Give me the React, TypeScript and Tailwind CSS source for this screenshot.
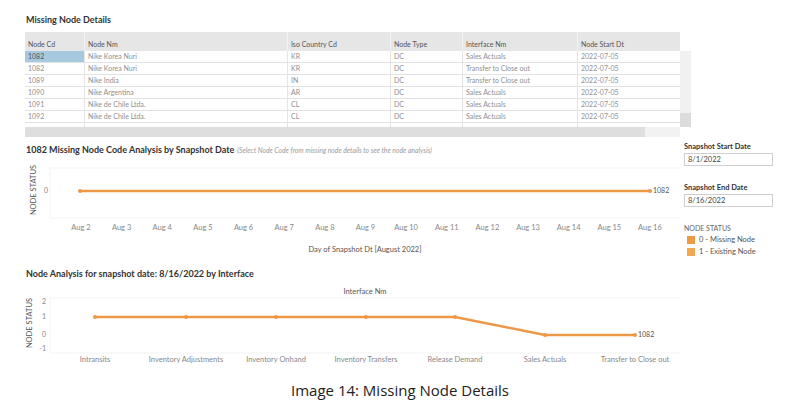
import React from "react";

const ORANGE = "#ec9847";

const columns = [
  { label: "Node Cd", w: "w-[60px]" },
  { label: "Node Nm", w: "w-[203px]" },
  { label: "Iso Country Cd", w: "w-[103px]" },
  { label: "Node Type", w: "w-[72px]" },
  { label: "Interface Nm", w: "w-[115px]" },
  { label: "Node Start Dt", w: "w-[102px]" },
];

const rows = [
  ["1082", "Nike Korea Nuri", "KR", "DC", "Sales Actuals", "2022-07-05"],
  ["1082", "Nike Korea Nuri", "KR", "DC", "Transfer to Close out", "2022-07-05"],
  ["1089", "Nike India", "IN", "DC", "Transfer to Close out", "2022-07-05"],
  ["1090", "Nike Argentina", "AR", "DC", "Sales Actuals", "2022-07-05"],
  ["1091", "Nike de Chile Ltda.", "CL", "DC", "Sales Actuals", "2022-07-05"],
  ["1092", "Nike de Chile Ltda.", "CL", "DC", "Sales Actuals", "2022-07-05"],
  ["", "", "", "", "", ""],
];

const days = Array.from({ length: 15 }, (_, i) => `Aug ${i + 2}`);

const interfaces = [
  { name: "Intransits", x: 70, v: 1 },
  { name: "Inventory Adjustments", x: 161, v: 1 },
  { name: "Inventory Onhand", x: 251, v: 1 },
  { name: "Inventory Transfers", x: 341, v: 1 },
  { name: "Release Demand", x: 430, v: 1 },
  { name: "Sales Actuals", x: 520, v: 0 },
  { name: "Transfer to Close out", x: 610, v: 0 },
];

// Missing node details table, Tableau-style
const NodeTable: React.FC = () => (
  <div className="ml-[25px] w-[666px]">
    <div className="flex h-[19px] w-[655px] bg-[#e6e6e6]">
      {columns.map((c, i) => (
        <div
          key={c.label}
          className={`${c.w} flex items-end pb-[2px] pl-[3px] text-[7px] leading-[9px] text-[#555] ${
            i < columns.length - 1 ? "border-r border-[#f2f2f2]" : ""
          }`}
        >
          {c.label}
        </div>
      ))}
    </div>
    <div className="flex h-[76px]">
      <div className="w-[655px] h-[76px] overflow-hidden">
        {rows.map((r, ri) => (
          <div key={ri} className="flex h-[12px] border-b border-[#e2e2e2]">
            {r.map((cell, ci) => (
              <div
                key={ci}
                className={`${columns[ci].w} pl-[3px] text-[7px] leading-[11px] ${
                  ri === 0 && ci === 0 ? "bg-[#a7c9dd] text-[#556]" : "text-[#909090]"
                } ${ci < columns.length - 1 ? "border-r border-[#e4e4e4]" : ""}`}
              >
                {cell}
              </div>
            ))}
          </div>
        ))}
      </div>
      <div className="w-[11px] h-[76px] bg-[#f1f1f1] flex flex-col justify-end">
        <div className="h-[14px] bg-[#dcdcdc]" />
      </div>
    </div>
    <div className="flex h-[10px] w-[655px]">
      <div className="w-[620px] bg-[#dedede]" />
      <div className="flex-1 bg-[#f2f2f2]" />
    </div>
  </div>
);

const SnapshotChart: React.FC = () => (
  <svg width="655" height="100" className="block">
    <line x1="25" y1="12" x2="655" y2="12" stroke="#f3f3f3" />
    <line x1="25" y1="62" x2="655" y2="62" stroke="#f3f3f3" />
    <line x1="25" y1="12" x2="25" y2="62" stroke="#f3f3f3" />
    <text
      x="9"
      y="34"
      transform="rotate(-90 9 34)"
      textAnchor="middle"
      dominantBaseline="middle"
      fontSize="7.5"
      fill="#555"
    >
      NODE STATUS
    </text>
    <text x="19" y="35" fontSize="7" fill="#888" dominantBaseline="middle">
      0
    </text>
    <line x1="55" y1="35" x2="625" y2="35" stroke={ORANGE} strokeWidth="2.5" />
    <circle cx="55" cy="35" r="2" fill={ORANGE} />
    <circle cx="625" cy="35" r="2" fill={ORANGE} />
    <text x="628" y="35" fontSize="7" fill="#555" dominantBaseline="middle">
      1082
    </text>
    {days.map((d, i) => (
      <text
        key={d}
        x={56 + i * 40.64}
        y="72"
        fontSize="7.5"
        fill="#888"
        textAnchor="middle"
        dominantBaseline="middle"
      >
        {d}
      </text>
    ))}
    <text x="340" y="94" fontSize="7.5" fill="#555" textAnchor="middle" dominantBaseline="middle">
      Day of Snapshot Dt [August 2022]
    </text>
  </svg>
);

const InterfaceChart: React.FC = () => {
  const yOf = (v: number) => (v === 1 ? 37 : 55);
  const pts = interfaces.map((p) => `${p.x},${yOf(p.v)}`).join(" ");
  return (
    <svg width="655" height="88" className="block">
      <line x1="25" y1="18" x2="655" y2="18" stroke="#f3f3f3" />
      <line x1="25" y1="73" x2="655" y2="73" stroke="#f3f3f3" />
      <line x1="25" y1="18" x2="25" y2="73" stroke="#f3f3f3" />
      <text x="340" y="12" fontSize="7.5" fill="#555" textAnchor="middle" dominantBaseline="middle">
        Interface Nm
      </text>
      <text
        x="5"
        y="43"
        transform="rotate(-90 5 43)"
        textAnchor="middle"
        dominantBaseline="middle"
        fontSize="7.5"
        fill="#555"
      >
        NODE STATUS
      </text>
      {[
        ["2", 22],
        ["1", 37],
        ["0", 55],
        ["-1", 69],
      ].map(([l, y]) => (
        <text
          key={l}
          x="21"
          y={y}
          fontSize="7"
          fill="#888"
          textAnchor="end"
          dominantBaseline="middle"
        >
          {l}
        </text>
      ))}
      <polyline points={pts} fill="none" stroke={ORANGE} strokeWidth="2.5" strokeLinejoin="round" />
      {interfaces.map((p) => (
        <circle key={p.name} cx={p.x} cy={yOf(p.v)} r="2" fill={ORANGE} />
      ))}
      <text x="613" y="55" fontSize="7" fill="#555" dominantBaseline="middle">
        1082
      </text>
      {interfaces.map((p) => (
        <text
          key={p.name}
          x={p.x}
          y="80"
          fontSize="7.5"
          fill="#888"
          textAnchor="middle"
          dominantBaseline="middle"
        >
          {p.name}
        </text>
      ))}
    </svg>
  );
};

const DateFilter: React.FC<{ label: string; value: string; top: string }> = ({
  label,
  value,
  top,
}) => (
  <div className={top}>
    <div className="h-[10px] text-[7.5px] leading-[10px] font-bold text-[#333]">{label}</div>
    <div className="mt-[1px] h-[13px] w-[89px] border border-[#cfcfcf] pl-[3px] text-[7.5px] leading-[11px] text-[#444]">
      {value}
    </div>
  </div>
);

export default function App() {
  return (
    <div className="w-[800px] h-[410px] bg-white overflow-hidden font-[Lato]">
      {/* Missing node details */}
      <section className="h-[137px]">
        <div className="pt-[14px] pl-[26px] h-[32px]">
          <h2 className="text-[9px] leading-[12px] font-bold text-[#333]">Missing Node Details</h2>
        </div>
        <NodeTable />
      </section>

      {/* Snapshot analysis + filters */}
      <section className="h-[125px] flex">
        <div className="ml-[25px] w-[655px]">
          <div className="mt-[7px] h-[12px] flex items-baseline gap-[3px] pl-[1px]">
            <h2 className="text-[9px] leading-[12px] font-bold text-[#333]">
              1082 Missing Node Code Analysis by Snapshot Date
            </h2>
            <span className="text-[6.8px] italic text-[#9a9a9a]">
              (Select Node Code from missing node details to see the node analysis)
            </span>
          </div>
          <SnapshotChart />
        </div>
        <div className="ml-[4px] w-[100px] pt-[5px]">
          <DateFilter label="Snapshot Start Date" value="8/1/2022" top="" />
          <DateFilter label="Snapshot End Date" value="8/16/2022" top="mt-[17px]" />
          <div className="mt-[16px] h-[10px] text-[7px] leading-[10px] text-[#666]">NODE STATUS</div>
          <div className="mt-[1px] flex flex-col">
            <div className="h-[12px] flex items-center gap-[4px] pl-[3px]">
              <span className="w-[8px] h-[8px] bg-[#ee9a40]" />
              <span className="text-[7.5px] text-[#555]">0 - Missing Node</span>
            </div>
            <div className="h-[12px] flex items-center gap-[4px] pl-[3px]">
              <span className="w-[8px] h-[8px] bg-[#f2a850]" />
              <span className="text-[7.5px] text-[#555]">1 - Existing Node</span>
            </div>
          </div>
        </div>
      </section>

      {/* Interface analysis */}
      <section className="h-[108px] pl-[25px]">
        <div className="pt-[6px] pl-[1px]">
          <h2 className="text-[9px] leading-[12px] font-bold text-[#333]">
            Node Analysis for snapshot date: 8/16/2022 by Interface
          </h2>
        </div>
        <InterfaceChart />
      </section>

      <div className="h-[40px] flex items-center justify-center font-['Open_Sans'] text-[15px] text-[#222]">
        Image 14: Missing Node Details
      </div>
    </div>
  );
}
